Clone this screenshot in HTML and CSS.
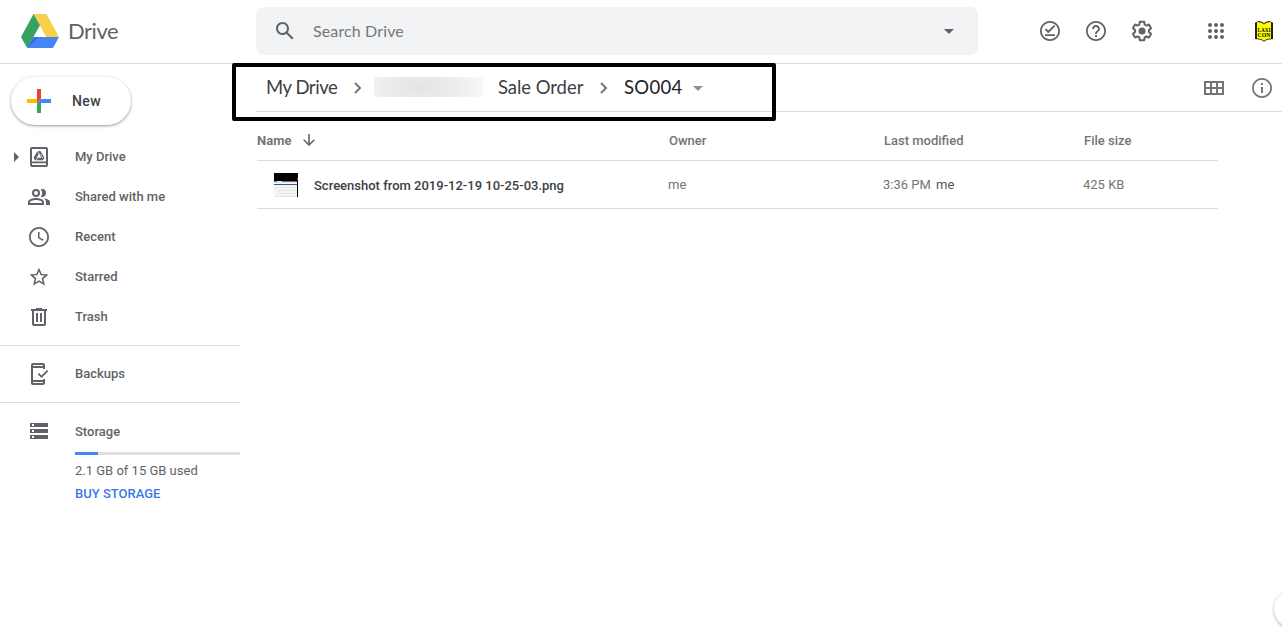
FILE: index.html
```html
<!DOCTYPE html>
<html lang="en">
<head>
<meta charset="utf-8">
<title>SO004 - Drive</title>
<link rel="stylesheet" href="styles.css">
</head>
<body>
<header class="header">
  <div class="brand">
    <svg class="logo" width="38" height="34" viewBox="0 0 38 34"><path fill="#f8d04b" d="M12.5 0H25.5L38 23H25.3z"/><path fill="#35a260" d="M12.5 0L19 11.3 6.2 34 0 23z"/><path fill="#4486f5" d="M12.5 23H38L32 34H6.2z"/><path fill="#3470d8" d="M12.5 23H18L6.2 34z"/></svg>
    <span class="brand-name">Drive</span>
  </div>
  <div class="search">
    <svg class="icon" viewBox="0 0 24 24"><path d="M20.49 19l-5.73-5.73C15.53 12.2 16 10.91 16 9.5 16 5.91 13.09 3 9.5 3S3 5.91 3 9.5 5.91 16 9.5 16c1.41 0 2.7-.47 3.77-1.24L19 20.49 20.49 19zM5 9.5C5 7.01 7.01 5 9.5 5S14 7.01 14 9.5 11.99 14 9.5 14 5 11.99 5 9.5z"/></svg>
    <span class="search-text">Search Drive</span>
    <svg class="icon search-arrow" viewBox="0 0 24 24"><path d="M7 10l5 5 5-5z"/></svg>
  </div>
  <div class="tools">
    <svg class="icon" viewBox="0 0 24 24"><path d="M12 2C6.5 2 2 6.5 2 12s4.500 10 10 10 10-4.500 10-10S17.500 2 12 2zm0 18.200c-4.500 0-8.200-3.700-8.200-8.200S7.500 3.800 12 3.800s8.200 3.700 8.200 8.200-3.700 8.200-8.200 8.200zM7 15.200h10V17H7zM17.300 7.200L16 5.900l-5.700 5.700-2.200-2.200-1.300 1.300 3.500 3.500z"/></svg>
    <svg class="icon" viewBox="0 0 24 24"><path d="M11 18h2v-2h-2v2zm1-16C6.480 2 2 6.480 2 12s4.480 10 10 10 10-4.480 10-10S17.520 2 12 2zm0 18.200c-4.500 0-8.200-3.700-8.200-8.200S7.500 3.800 12 3.800s8.200 3.700 8.200 8.200-3.700 8.200-8.200 8.200zM12 6c-2.210 0-4 1.790-4 4h2c0-1.100.9-2 2-2s2 .9 2 2c0 2-3 1.750-3 5h2c0-2.250 3-2.500 3-5 0-2.210-1.790-4-4-4z"/></svg>
    <svg class="icon" viewBox="0 0 24 24"><path d="M13.85 22.25h-3.7c-.74 0-1.36-.54-1.45-1.27l-.27-1.89c-.27-.14-.53-.29-.79-.46l-1.8.72c-.7.26-1.47-.03-1.81-.65L2.2 15.53c-.35-.66-.2-1.44.36-1.88l1.53-1.19c-.01-.15-.02-.3-.02-.46 0-.15.01-.31.02-.46l-1.52-1.19c-.59-.45-.74-1.26-.37-1.88l1.85-3.19c.34-.62 1.11-.9 1.79-.63l1.81.73c.26-.17.52-.32.78-.46l.27-1.91c.09-.7.71-1.25 1.44-1.25h3.7c.74 0 1.36.54 1.45 1.27l.27 1.89c.27.14.53.29.79.46l1.8-.72c.71-.26 1.48.03 1.82.65l1.84 3.18c.36.66.2 1.44-.36 1.88l-1.52 1.19c.01.15.02.3.02.46s-.01.31-.02.46l1.52 1.19c.56.45.72 1.23.37 1.86l-1.86 3.22c-.34.62-1.11.9-1.8.63l-1.8-.72c-.26.17-.52.32-.78.46l-.27 1.91c-.1.68-.72 1.22-1.46 1.22zm-3.23-2h2.76l.37-2.55.53-.22c.44-.18.88-.44 1.34-.78l.45-.34 2.38.96 1.38-2.4-2.03-1.58.07-.56c.03-.26.06-.51.06-.78s-.03-.53-.06-.78l-.07-.56 2.03-1.58-1.39-2.4-2.39.96-.45-.35c-.42-.32-.87-.58-1.33-.77l-.52-.22-.37-2.55h-2.76l-.37 2.55-.53.21c-.44.19-.88.44-1.34.79l-.45.33-2.38-.95-1.39 2.39 2.03 1.58-.07.56a7 7 0 0 0-.06.79c0 .26.02.53.06.78l.07.56-2.03 1.58 1.38 2.4 2.39-.96.45.35c.43.33.86.58 1.33.77l.53.22.38 2.55z"/><circle cx="12" cy="12" r="3.5"/></svg>
    <svg class="icon apps" viewBox="0 0 24 24"><path d="M6 8a2 2 0 1 0 0-4 2 2 0 0 0 0 4zm6 0a2 2 0 1 0 0-4 2 2 0 0 0 0 4zm6 0a2 2 0 1 0 0-4 2 2 0 0 0 0 4zM6 14a2 2 0 1 0 0-4 2 2 0 0 0 0 4zm6 0a2 2 0 1 0 0-4 2 2 0 0 0 0 4zm6 0a2 2 0 1 0 0-4 2 2 0 0 0 0 4zM6 20a2 2 0 1 0 0-4 2 2 0 0 0 0 4zm6 0a2 2 0 1 0 0-4 2 2 0 0 0 0 4zm6 0a2 2 0 1 0 0-4 2 2 0 0 0 0 4z"/></svg>
    <svg class="avatar" width="18" height="22" viewBox="0 0 18 22"><path d="M0 1.500L2 1 3 0Q7.500 0 9 2.500 10.500 0 15 0l1 1 2 .5V18l-6 .8-3 2-3-2L0 18z" fill="#222"/><path d="M2 1Q7 1 9 3.500 11 1 16 1V17.500Q12 17 9 19.800 6 17 2 17.500z" fill="#ff0"/><text class="avatar-text" x="9" y="10.500" textLength="13" lengthAdjust="spacingAndGlyphs">LAXI</text><text class="avatar-text" x="9" y="16" textLength="13" lengthAdjust="spacingAndGlyphs">CON</text></svg>
  </div>
</header>
<div class="page">
  <nav class="sidebar">
    <div class="new">
      <svg width="24" height="24" viewBox="0 0 24 24"><path fill="#ea4335" d="M10 0h4v10l-4 4z"/><path fill="#fbbc04" d="M0 10h10v4H0z"/><path fill="#34a853" d="M10 14l4-1v11h-4z"/><path fill="#4285f4" d="M14 10h10v4H10z"/></svg>
      <span>New</span>
    </div>
    <div class="item"><svg class="expand" width="6" height="10" viewBox="0 0 6 10"><path d="M0 0l5 5-5 5z"/></svg><svg class="icon" viewBox="0 0 24 24"><path fill-rule="evenodd" d="M5 2h14a2 2 0 0 1 2 2v16a2 2 0 0 1-2 2H5a2 2 0 0 1-2-2V4c0-1.100.9-2 2-2zm0 2v12.500h14V4zm0 14.200V20h14v-1.800z"/><path fill-rule="evenodd" d="M10.600 6h2.800l4.100 6.800-1.400 2.400H7.900l-1.400-2.400zM12 8.600L9.700 12.800h4.600z"/><path d="M10.500 6l2 3.300-3.300 5.900M13.500 9l2.300 4.200" fill="none" stroke="#fff" stroke-width=".7"/></svg><span>My Drive</span></div>
    <div class="item"><svg class="icon" viewBox="0 0 24 24"><path fill-rule="evenodd" d="M9 4a4 4 0 1 0 0 8 4 4 0 0 0 0-8zm0 2a2 2 0 1 1 0 4 2 2 0 0 1 0-4zM9 13c-2.700 0-8 1.300-8 4v3h16v-3c0-2.700-5.300-4-8-4zm6 5H3v-1c0-.7 3.200-2 6-2s6 1.300 6 2zM15 12a4 4 0 0 0 0-8c-.5 0-.9.100-1.300.2a6 6 0 0 1 0 7.600c.4.100.8.200 1.300.2zM16.700 13.200C18.100 14.100 19 15.400 19 17v3h4v-3c0-2.200-3.500-3.400-6.300-3.800z"/></svg><span>Shared with me</span></div>
    <div class="item"><svg class="icon" viewBox="0 0 24 24"><path d="M12 2C6.500 2 2 6.500 2 12s4.500 10 10 10 10-4.500 10-10S17.500 2 12 2zm0 18.200c-4.500 0-8.200-3.700-8.200-8.200S7.500 3.800 12 3.800s8.200 3.700 8.200 8.200-3.700 8.200-8.200 8.200zM12.500 7H11v6l4.800 2.900.8-1.300-4.100-2.400z"/></svg><span>Recent</span></div>
    <div class="item"><svg class="icon" viewBox="0 0 24 24"><path d="M21.500 9.600l-6.700-.6L12 2.800 9.200 9l-6.700.6 5.100 4.400-1.500 6.600 5.900-3.500 5.900 3.500-1.500-6.600zM12 15.200l-3.600 2.200.9-4.100-3.100-2.700 4.100-.4L12 6.500l1.700 3.700 4.100.4-3.100 2.700.9 4.100z"/></svg><span>Starred</span></div>
    <div class="item"><svg class="icon" viewBox="0 0 24 24"><path d="M15 4V3H9v1H4v2h1v13a2 2 0 0 0 2 2h10a2 2 0 0 0 2-2V6h1V4zm2 15H7V6h10zM9 8h2v9H9zm4 0h2v9h-2z"/></svg><span>Trash</span></div>
    <hr class="divider">
    <div class="item backups"><svg class="icon" viewBox="0 0 24 24"><path fill-rule="evenodd" d="M6 1h10a2 2 0 0 1 2 2v4h-2V6H6v12h10v-1h2v4a2 2 0 0 1-2 2H6a2 2 0 0 1-2-2V3c0-1.100.9-2 2-2zm0 2v1h10V3zm0 17v1h10v-1z"/><path d="M20 8l-5.500 5.500-2.500-2.500-1.300 1.300 3.800 3.800 6.800-6.800z"/></svg><span>Backups</span></div>
    <hr class="divider">
    <div class="item storage"><svg class="icon" viewBox="0 0 24 24"><path fill-rule="evenodd" d="M3 20h18v-4H3zm2-3h2v2H5zM3 4v4h18V4zm4 3H5V5h2zm-4 7h18v-4H3zm2-3h2v2H5z"/></svg><span>Storage</span></div>
    <div class="quota">
      <div class="meter"><div class="meter-fill"></div></div>
      <div class="used">2.1 GB of 15 GB used</div>
      <div class="buy">BUY STORAGE</div>
    </div>
  </nav>
  <main class="main">
    <div class="toolbar">
      <div class="crumbs">
        <span class="crumb crumb-root">My Drive</span>
        <svg class="chevron" width="8" height="12" viewBox="0 0 8 12"><path d="M1 1l5 5-5 5"/></svg>
        <span class="redacted"></span>
        <span class="crumb crumb-order">Sale Order</span>
        <svg class="chevron" width="8" height="12" viewBox="0 0 8 12"><path d="M1 1l5 5-5 5"/></svg>
        <span class="crumb current">SO004</span>
        <svg class="caret" width="10" height="5" viewBox="0 0 10 5"><path d="M0 0h10L5 5z"/></svg>
      </div>
      <div class="view-tools">
        <svg width="20" height="14" viewBox="0 0 20 14"><path fill-rule="evenodd" d="M0 0h20v14H0zM2 2v4h4V2zm6 0v4h4V2zm6 0v4h4V2zM2 8v4h4V8zm6 0v4h4V8zm6 0v4h4V8z"/></svg>
        <svg width="24" height="24" viewBox="0 0 24 24"><path d="M11 17h2v-6h-2zm0-8h2V7h-2zM12 2C6.500 2 2 6.500 2 12s4.500 10 10 10 10-4.500 10-10S17.500 2 12 2zm0 18.300a8.300 8.300 0 1 1 0-16.600 8.300 8.300 0 0 1 0 16.600z"/></svg>
      </div>
    </div>
    <div class="table">
      <div class="row head">
        <div class="name-head">Name <svg width="12" height="12" viewBox="0 0 12 12"><path d="M6 0v11M.7 5.700L6 11l5.300-5.300"/></svg></div>
        <div>Owner</div><div>Last modified</div><div>File size</div>
      </div>
      <div class="row">
        <div class="file"><svg width="24" height="24" viewBox="0 0 24 24"><path fill="#f4f6f6" d="M0 0h24v24H0z"/><path fill="#000" d="M0 0h24v8H0zM23 0h1v24h-1z"/><path fill="#77736a" d="M0 8h23v1H0z"/><path fill="#e8e8e8" d="M0 9h23v1H0zM3 8h5v1H3z"/><path fill="#2e5e98" d="M0 11h23v1H0z"/><path fill="#e4e7e8" d="M0 14h22v1H0zM3 17h19v1H3zM3 20h19v1H3zM0 23h22v1H0z"/><path fill="#c34545" d="M23 5h1v2h-1z"/></svg><span class="file-name">Screenshot from 2019-12-19 10-25-03.png</span></div>
        <div class="cell">me</div><div class="cell">3:36 PM <span class="modifier">me</span></div><div class="cell">425 KB</div>
      </div>
    </div>
  </main>
</div>
<div class="highlight"></div>
<div class="fab"></div>
</body>
</html>
```
FILE: styles.css
```css
* { box-sizing: border-box; }
body { margin: 0; height: 637px; position: relative; overflow: hidden; background: #fff; color: #5f6368; font: 500 13px/20px Roboto, sans-serif; }
svg { display: block; flex: none; fill: currentColor; }
.icon { width: 24px; height: 24px; }
.header { display: flex; height: 64px; border-bottom: 1px solid #dadce0; }
.brand { display: flex; width: 256px; padding: 14px 0 0 21px; gap: 9px; }
.brand-name { font: 400 22px/34px Lato, sans-serif; letter-spacing: -.45px; }
.search { display: flex; align-items: center; width: 722px; height: 48px; margin-top: 7px; padding: 0 17px; border-radius: 8px; background: #f1f3f4; }
.search-text { flex: 1; margin-left: 16px; color: #757779; font: 400 16px/24px Lato, sans-serif; letter-spacing: .13px; }
.tools { display: flex; height: 62px; align-items: center; gap: 22px; margin-left: 60px; }
.apps { margin-left: 28px; }
.avatar { margin: 1px 0 0 5px; }
.avatar-text { font: 700 6.5px "Liberation Serif", serif; fill: #000; text-anchor: middle; }
.page { display: flex; }
.sidebar { width: 240px; padding-top: 13px; }
.new { display: flex; align-items: center; gap: 21px; width: 120px; height: 48px; margin: 0 0 12px 11px; padding-left: 16px; border-radius: 24px; color: #3c4043; font: 500 14px/20px Roboto, sans-serif; letter-spacing: .4px; box-shadow: 0 1px 2px rgba(60,64,67,.35), 0 1px 3px 1px rgba(60,64,67,.15); }
.item { display: flex; position: relative; align-items: center; gap: 24px; height: 40px; padding-left: 27px; }
.expand { position: absolute; left: 14px; }
.divider { height: 1px; margin: 8px 0; border: 0; background: #dadce0; }
.storage { margin-top: 9px; }
.storage .icon { margin-top: -2px; }
.quota { padding-left: 75px; }
.meter { height: 3px; background: #e0e0e0; }
.meter-fill { width: 23px; height: 3px; background: #4285f4; }
.used { margin-top: 6px; font-weight: 400; }
.buy { margin-top: 3px; color: #3b78e7; }
.main { flex: 1; padding-left: 16px; }
.toolbar { display: flex; justify-content: space-between; height: 48px; border-bottom: 1px solid #dadce0; }
.crumbs, .view-tools { display: flex; align-items: center; }
.crumbs { padding-left: 10px; }
.crumb { margin-top: -2px; font: 400 18.5px/24px Lato, sans-serif; color: #3c4043; white-space: nowrap; }
.crumb-root { width: 88px; letter-spacing: -.45px; }
.crumb-order { width: 102px; margin-left: 15px; letter-spacing: -.05px; }
.chevron { fill: none; stroke: #777; stroke-width: 2; }
.redacted { width: 109px; height: 20px; margin: -2px 0 0 12px; background: radial-gradient(ellipse 65px 30px at 42% 50%, #e4e4e4, #ededed 60%, #f8f8f8); }
.current { width: 69px; margin-left: 16px; color: #202124; letter-spacing: .3px; }
.caret { color: #8d8f91; margin-top: 1px; }
.view-tools { gap: 26px; color: #757575; padding-right: 8px; }
.table { width: 962px; padding-left: 1px; }
.row { display: grid; grid-template-columns: 411px 215px 200px 1fr; align-items: center; height: 48px; border-bottom: 1px solid #dadce0; color: #757575; }
.head { height: 49px; padding-top: 9px; }
.head > div + div { padding-left: 1px; }
.name-head { display: flex; align-items: center; gap: 12px; font-weight: 700; }
.name-head svg { margin-top: -2px; fill: none; stroke: #666; stroke-width: 1.6; }
.file { display: flex; align-items: center; gap: 16px; padding-left: 17px; color: #3c4043; }
.file-name { margin-top: 2px; }
.cell { font-weight: 400; }
.modifier { margin-left: 2px; color: #55585b; }
.highlight { position: absolute; left: 232px; top: 63px; width: 544px; height: 58px; border: 4px solid #000; border-radius: 2px; }
.fab { position: absolute; left: 1274px; top: 590px; width: 38px; height: 38px; border-radius: 50%; background: #fff; box-shadow: 0 1px 3px rgba(0,0,0,.35); }
```
